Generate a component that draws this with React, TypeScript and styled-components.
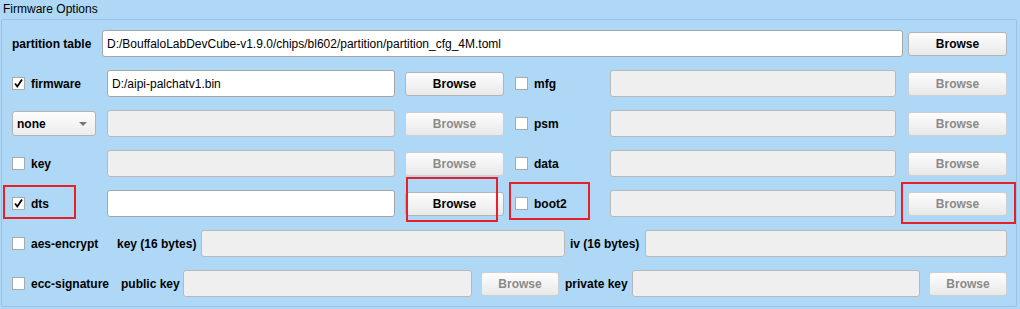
import styled, { createGlobalStyle } from "styled-components";

const GlobalStyle = createGlobalStyle`
  body {
    margin: 0;
    background: #afd8f7;
    font-family: "Liberation Sans", Arial, sans-serif;
    font-size: 12px;
    color: #000;
  }
`;

const Page = styled.div`
  position: relative;
  width: 1020px;
  height: 309px;
  background: #afd8f7;
`;

const Title = styled.div`
  height: 19px;
  padding-left: 3px;
  line-height: 19px;
  font-size: 12px;
`;

const Panel = styled.div`
  margin-left: 1px;
  width: 1016px;
  height: 288px;
  box-sizing: border-box;
  border: 1px solid #94c3e6;
  border-radius: 2px;
  padding: 10px 0 0 10px;
  display: flex;
  flex-direction: column;
  gap: 13px;
`;

const Row = styled.div`
  display: flex;
  align-items: center;
  height: 27px;
`;

const Label = styled.div<{ $w: number; $pl?: number }>`
  width: ${(p) => p.$w}px;
  padding-left: ${(p) => p.$pl ?? 0}px;
  box-sizing: border-box;
  font-weight: bold;
  white-space: nowrap;
  flex: none;
`;

const CheckLabel = styled.label<{ $w: number }>`
  width: ${(p) => p.$w}px;
  display: flex;
  align-items: center;
  gap: 6px;
  font-weight: bold;
  white-space: nowrap;
  flex: none;
`;

const Box = styled.span`
  width: 13px;
  height: 13px;
  box-sizing: border-box;
  border: 1px solid #a9a9a9;
  background: #fff;
  display: flex;
  align-items: center;
  justify-content: center;
  flex: none;
`;

const Field = styled.div<{ $w: number; $off?: boolean; $ml?: number }>`
  width: ${(p) => p.$w}px;
  margin-left: ${(p) => p.$ml ?? 0}px;
  height: 27px;
  box-sizing: border-box;
  border: 1px solid ${(p) => (p.$off ? "#b9b9b9" : "#a6a6a6")};
  border-radius: 3px;
  background: ${(p) => (p.$off ? "#efefef" : "#fff")};
  padding-left: 4px;
  display: flex;
  align-items: center;
  font-size: 12px;
  white-space: nowrap;
  overflow: hidden;
  flex: none;
`;

const Button = styled.div<{ $w?: number; $off?: boolean; $ml?: number }>`
  width: ${(p) => p.$w ?? 99}px;
  margin-left: ${(p) => p.$ml ?? 0}px;
  height: 24px;
  box-sizing: border-box;
  border: 1px solid ${(p) => (p.$off ? "#cfcfcf" : "#b4b4b4")};
  border-radius: 3px;
  background: linear-gradient(#fdfdfd, #e9e9e9);
  color: ${(p) => (p.$off ? "#8a8a8a" : "#000")};
  font-weight: bold;
  display: flex;
  align-items: center;
  justify-content: center;
  flex: none;
`;

const Combo = styled.div`
  width: 84px;
  height: 25px;
  margin-right: 11px;
  box-sizing: border-box;
  border: 1px solid #b4b4b4;
  border-radius: 3px;
  background: linear-gradient(#fdfdfd, #ececec);
  padding: 0 8px 0 4px;
  display: flex;
  align-items: center;
  justify-content: space-between;
  font-weight: bold;
  flex: none;
`;

const Arrow = styled.span`
  width: 0;
  height: 0;
  border-left: 4px solid transparent;
  border-right: 4px solid transparent;
  border-top: 4px solid #777;
`;

const Mark = styled.div<{ $x: number; $y: number; $w: number; $h: number }>`
  position: absolute;
  left: ${(p) => p.$x}px;
  top: ${(p) => p.$y}px;
  width: ${(p) => p.$w}px;
  height: ${(p) => p.$h}px;
  box-sizing: border-box;
  border: 2px solid #e8202a;
  pointer-events: none;
`;

function Check({ on, w, text }: { on?: boolean; w: number; text: string }) {
  return (
    <CheckLabel $w={w}>
      <Box>
        {on && (
          <svg width="11" height="11" viewBox="0 0 11 11">
            <path d="M2 5.5 L4.3 8.5 L9 1.5" fill="none" stroke="#000" strokeWidth="1.8" />
          </svg>
        )}
      </Box>
      {text}
    </CheckLabel>
  );
}

export default function App() {
  return (
    <Page>
      <GlobalStyle />
      <Title>Firmware Options</Title>
      <Panel>
        <Row>
          <Label $w={90}>partition table</Label>
          <Field $w={801}>D:/BouffaloLabDevCube-v1.9.0/chips/bl602/partition/partition_cfg_4M.toml</Field>
          <Button $ml={5}>Browse</Button>
        </Row>
        <Row>
          <Check on w={95} text="firmware" />
          <Field $w={288}>D:/aipi-palchatv1.bin</Field>
          <Button $ml={10}>Browse</Button>
          <span style={{ width: 11 }} />
          <Check w={95} text="mfg" />
          <Field $w={286} $off />
          <Button $ml={12} $off>Browse</Button>
        </Row>
        <Row>
          <Combo>
            none
            <Arrow />
          </Combo>
          <Field $w={288} $off />
          <Button $ml={10} $off>Browse</Button>
          <span style={{ width: 11 }} />
          <Check w={95} text="psm" />
          <Field $w={286} $off />
          <Button $ml={12} $off>Browse</Button>
        </Row>
        <Row>
          <Check w={95} text="key" />
          <Field $w={288} $off />
          <Button $ml={10} $off>Browse</Button>
          <span style={{ width: 11 }} />
          <Check w={95} text="data" />
          <Field $w={286} $off />
          <Button $ml={12} $off>Browse</Button>
        </Row>
        <Row>
          <Check on w={95} text="dts" />
          <Field $w={288} />
          <Button $ml={10}>Browse</Button>
          <span style={{ width: 11 }} />
          <Check w={95} text="boot2" />
          <Field $w={286} $off />
          <Button $ml={12} $off>Browse</Button>
        </Row>
        <Row>
          <Check w={105} text="aes-encrypt" />
          <Label $w={84}>key (16 bytes)</Label>
          <Field $w={364} $off />
          <Label $w={80} $pl={5}>iv (16 bytes)</Label>
          <Field $w={362} $off />
        </Row>
        <Row>
          <Check w={109} text="ecc-signature" />
          <Label $w={62}>public key</Label>
          <Field $w={289} $off />
          <Button $w={78} $ml={9} $off>Browse</Button>
          <Label $w={73} $pl={6}>private key</Label>
          <Field $w={288} $off />
          <Button $w={78} $ml={9} $off>Browse</Button>
        </Row>
      </Panel>
      <Mark $x={3} $y={185} $w={73} $h={34} />
      <Mark $x={406} $y={177} $w={92} $h={45} />
      <Mark $x={509} $y={182} $w={81} $h={38} />
      <Mark $x={901} $y={182} $w={115} $h={42} />
    </Page>
  );
}
